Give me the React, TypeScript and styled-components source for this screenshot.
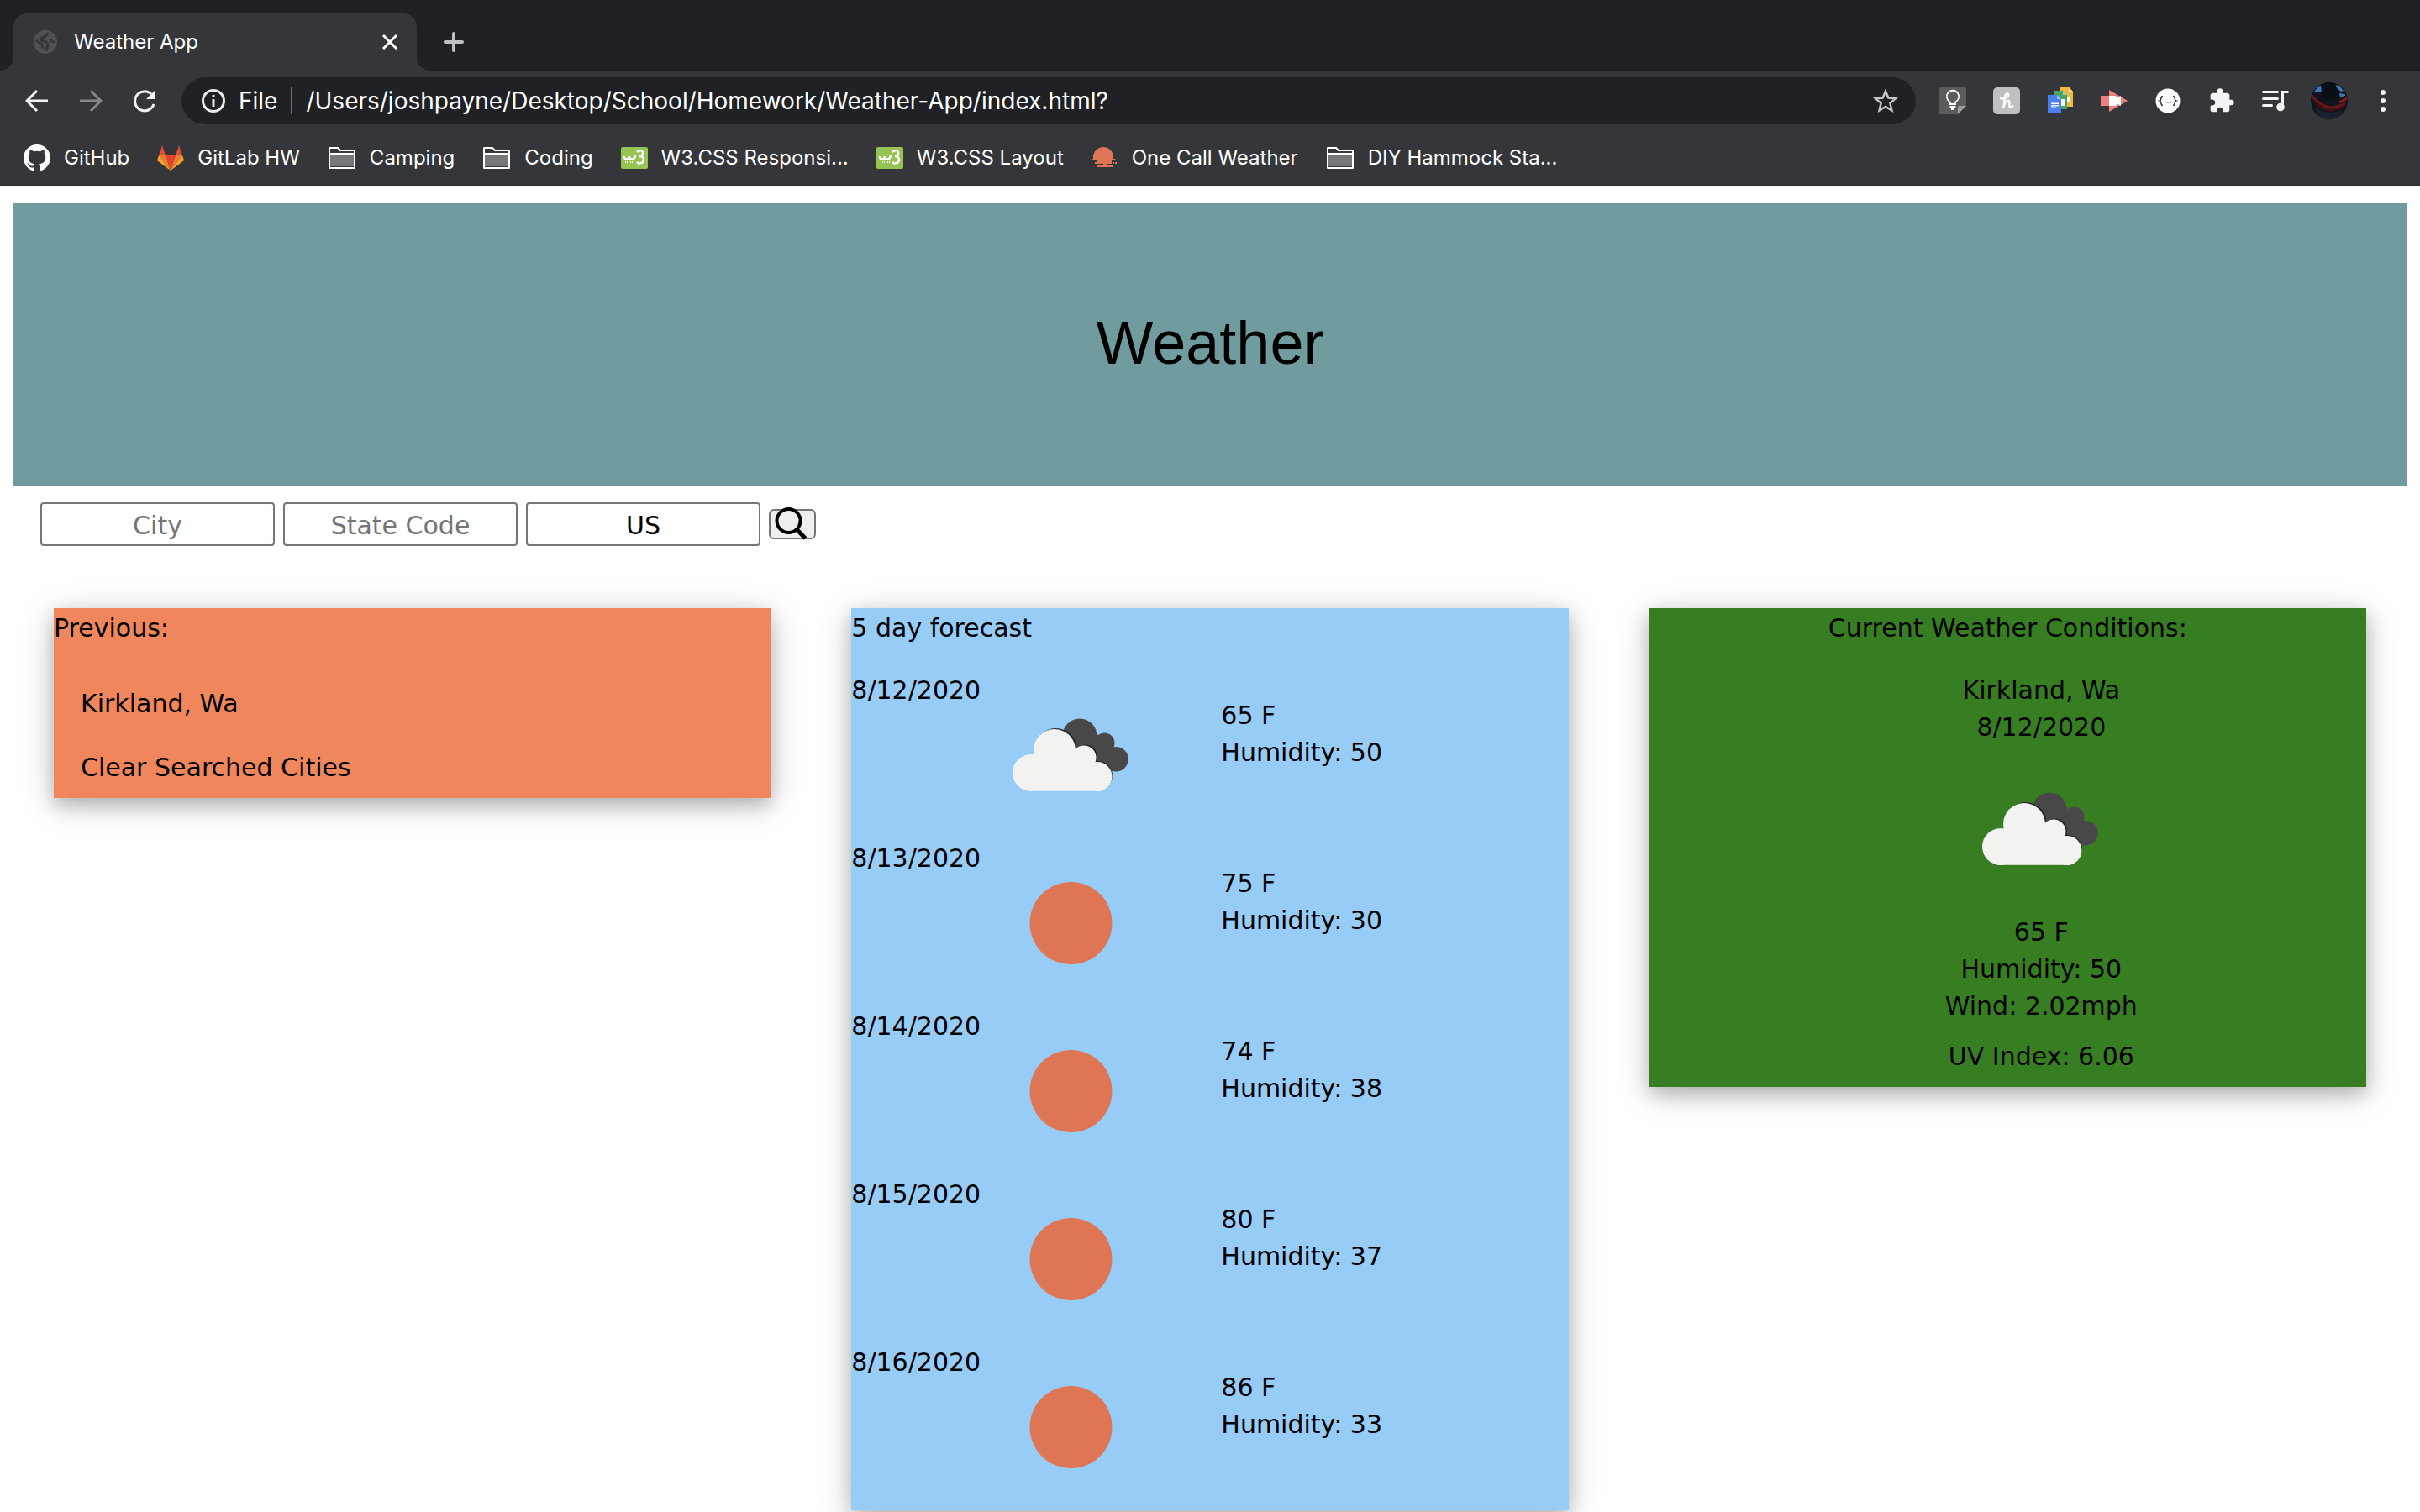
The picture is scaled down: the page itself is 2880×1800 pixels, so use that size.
import React from 'react';
import styled, { createGlobalStyle } from 'styled-components';

const GlobalStyle = createGlobalStyle`
  *, *::before, *::after { box-sizing: border-box; }
  html, body { margin: 0; background: #fff; color: #000; }
  body { font-family: Verdana, "DejaVu Sans", sans-serif; font-size: 30px; line-height: 44px; overflow-x: hidden; }
  ul, p, h1, h2, form { margin: 0; padding: 0; font-weight: 400; }
  ul { list-style: none; }
  button, input { font: inherit; }
  svg { display: block; }
`;

/* ---------- browser frame ---------- */

const Chrome = styled.header`
  background: #35363a;
  color: #fff;
  border-bottom: 2px solid #28292c;
  font-family: Inter, Roboto, sans-serif;
  font-size: 24px;
  line-height: 32px;
`;

const TabStrip = styled.div`
  display: flex;
  align-items: flex-end;
  height: 84px;
  padding: 0 16px;
  background: #202124;
`;

const Tab = styled.div`
  position: relative;
  display: flex;
  align-items: center;
  gap: 20px;
  width: 480px;
  height: 68px;
  padding: 0 16px 0 24px;
  border-radius: 16px 16px 0 0;
  background: #35363a;

  &::before, &::after {
    content: "";
    position: absolute;
    bottom: 0;
    width: 16px;
    height: 16px;
  }
  &::before { left: -16px; background: radial-gradient(circle at 0 0, #202124 16px, #35363a 16px); }
  &::after { right: -16px; background: radial-gradient(circle at 100% 0, #202124 16px, #35363a 16px); }
`;

const TabTitle = styled.span`
  flex: 1;
`;

const IconButton = styled.button<{ $size?: number }>`
  display: flex;
  flex: none;
  align-items: center;
  justify-content: center;
  width: ${(p) => p.$size ?? 64}px;
  height: ${(p) => p.$size ?? 64}px;
  padding: 0;
  border: 0;
  background: transparent;
  color: #f1f3f4;
`;

const NewTab = styled(IconButton)`
  margin: 0 0 2px 12px;
  color: #bdc1c6;
`;

const Toolbar = styled.nav`
  display: flex;
  align-items: center;
  height: 72px;
  padding: 0 12px;
`;

const Omnibox = styled.div`
  display: flex;
  flex: 1;
  align-items: center;
  height: 56px;
  margin: 0 12px;
  padding: 0 4px 0 24px;
  border-radius: 28px;
  background: #202124;
  font-size: 28px;
`;

const Scheme = styled.label`
  padding: 0 16px;
  border-right: 2px solid #6b6d70;
`;

const Address = styled.input`
  flex: 1;
  min-width: 0;
  padding: 0 16px;
  border: 0;
  outline: 0;
  background: transparent;
  color: #fff;
`;

const Bookmarks = styled.nav`
  display: flex;
  align-items: center;
  gap: 33px;
  height: 64px;
  padding: 0 28px;
`;

const Bookmark = styled.a`
  display: flex;
  align-items: center;
  gap: 16px;
  color: #fff;
  text-decoration: none;
  white-space: nowrap;
`;

/* ---------- page ---------- */

const Page = styled.main`
  padding: 20px 16px 0;
`;

const Banner = styled.div`
  padding: 112px 32px 116px;
  background: #709c9f;
  text-align: center;
`;

const Title = styled.h1`
  font-family: "Liberation Sans", Arial, sans-serif;
  font-size: 72px;
  line-height: 108px;
`;

const SearchForm = styled.form`
  display: flex;
  align-items: center;
  gap: 10px;
  padding: 20px 32px 0;
`;

const Field = styled.input`
  width: 279px;
  height: 52px;
  padding: 4px 4px 2px;
  border: 2px solid #767676;
  border-radius: 4px;
  outline: 0;
  background: #fff;
  color: #000;
  text-align: center;

  &::placeholder { color: #757575; opacity: 1; }
`;

const SearchButton = styled.button`
  display: flex;
  align-items: center;
  justify-content: center;
  width: 56px;
  height: 36px;
  padding: 0 8px 0 4px;
  border: 2px solid #767676;
  border-radius: 6px;
  background: #efefef;

  svg { flex: none; }
`;

const Columns = styled.div`
  display: grid;
  grid-template-columns: repeat(3, minmax(0, 1fr));
  align-items: start;
  gap: 96px;
  padding: 74px 48px 96px;
`;

const Card = styled.section<{ $tone: string }>`
  padding-top: 2px;
  background: ${(p) => p.$tone};
  box-shadow: 0 8px 20px rgba(0, 0, 0, 0.2), 0 8px 40px rgba(0, 0, 0, 0.19);
`;

const CardTitle = styled.h2<{ $centered?: boolean }>`
  margin-bottom: 30px;
  font-size: 30px;
  line-height: 44px;
  text-align: ${(p) => (p.$centered ? 'center' : 'left')};
`;

const CityButton = styled.button`
  display: block;
  padding: 16px 32px;
  border: 0;
  background: transparent;
  color: #000;

  &:last-child { padding-bottom: 14px; }
`;

const Day = styled.li`
  display: grid;
  grid-template-columns: 162px 200px 1fr;
  height: 200px;

  &:last-child { height: 198px; }
`;

const Reading = styled.div`
  padding: 30px 0 0 78px;
`;

const Current = styled.div`
  display: flex;
  flex-direction: column;
  align-items: center;
  padding-left: 80px;
`;

const UvIndex = styled.p`
  padding: 16px 32px 14px;
`;

/* ---------- drawings ---------- */

const Clouds = () => (
  <svg width="200" height="200" viewBox="0 0 200 200" role="img" aria-label="Broken clouds">
    <g fill="#484849">
      <circle cx="110" cy="76" r="20.500" />
      <circle cx="139.500" cy="84.500" r="12" />
      <circle cx="153" cy="103.800" r="14.800" />
      <path d="M104 70h24l16 22 6 26h-34z" />
    </g>
    <g fill="#222224">
      <circle cx="81.500" cy="92" r="25" />
      <circle cx="116.500" cy="101" r="14.500" />
      <circle cx="131.500" cy="123.500" r="17.500" />
    </g>
    <g fill="#f2f2f0">
      <circle cx="80" cy="93" r="25" />
      <circle cx="52" cy="120" r="22" />
      <circle cx="115" cy="102" r="14.500" />
      <circle cx="131" cy="124.500" r="17.500" />
      <path d="M48 141.700h87V112L125 107 104 92H60L50 108z" />
    </g>
  </svg>
);

const Sun = () => (
  <svg width="200" height="200" viewBox="0 0 200 200" role="img" aria-label="Clear sky">
    <circle cx="99.500" cy="99" r="49" fill="#de7554" />
  </svg>
);

const Magnifier = () => (
  <svg width="40" height="40" viewBox="0 0 40 40" fill="none" stroke="#000" strokeWidth="4" aria-hidden="true">
    <circle cx="17.500" cy="16" r="14" />
    <path d="M27 26l10.500 11" strokeWidth="5" />
  </svg>
);

const Globe = () => (
  <svg width="28" height="28" viewBox="0 0 28 28" aria-hidden="true">
    <circle cx="14" cy="14" r="14" fill="#505154" />
    <path
      d="M17 3c-1 4-4 5-7 6-2 1-1 4 2 4 3 1 5 1 5 4s-1 3-2 8M3 12c2 2 4 2 6 4s2 4 2 6M20 11c1 2 3 3 5 3"
      fill="none" stroke="#35363a" strokeWidth="3"
    />
  </svg>
);

const Close = () => (
  <svg width="18" height="18" viewBox="0 0 18 18" stroke="#fff" strokeWidth="3" aria-hidden="true">
    <path d="M1 1l16 16M17 1L1 17" />
  </svg>
);

const Plus = () => (
  <svg width="24" height="24" viewBox="0 0 24 24" stroke="currentColor" strokeWidth="4" strokeLinecap="round" aria-hidden="true">
    <path d="M12 2v20M2 12h20" />
  </svg>
);

const Arrow = ({ forward }: { forward?: boolean }) => (
  <svg width="28" height="28" viewBox="0 0 28 28" fill="none" stroke={forward ? '#85868a' : '#f1f3f4'} strokeWidth="3" aria-hidden="true">
    {forward ? <path d="M1 14h24M14 2l12 12-12 12" /> : <path d="M27 14H3M14 2L2 14l12 12" />}
  </svg>
);

const Reload = () => (
  <svg width="28" height="28" viewBox="0 0 28 28" aria-hidden="true">
    <path d="M25 18A11.500 11.500 0 1 1 22 6" fill="none" stroke="#f1f3f4" strokeWidth="3" />
    <path d="M27 1v11H16z" fill="#f1f3f4" />
  </svg>
);

const Info = () => (
  <svg width="28" height="28" viewBox="0 0 28 28" aria-hidden="true">
    <circle cx="14" cy="14" r="12.500" fill="none" stroke="#e8eaed" strokeWidth="3" />
    <path d="M12.500 12h3v9h-3zM12.500 7h3v3h-3z" fill="#e8eaed" />
  </svg>
);

const Star = () => (
  <svg width="30" height="30" viewBox="0 0 30 30" fill="none" stroke="#c4c6c9" strokeWidth="2.500" aria-hidden="true">
    <path d="M15 3.500l3.300 8 8.700.7-6.600 5.700 2 8.600L15 22l-7.400 4.500 2-8.600L3 12.200l8.700-.7z" />
  </svg>
);

const Keep = () => (
  <svg width="32" height="32" viewBox="0 0 32 32" aria-hidden="true">
    <path d="M2 0h28a2 2 0 0 1 2 2v20L22 32H2a2 2 0 0 1-2-2V2a2 2 0 0 1 2-2z" fill="#5c5c5c" />
    <path d="M22 32V24a2 2 0 0 1 2-2h8z" fill="#9c9c9c" />
    <path d="M13 20v-2.500a7.200 7.200 0 1 1 6 0V20z" fill="none" stroke="#fff" strokeWidth="1.800" />
    <path d="M12.500 22h7v2h-7zM14 25h4v2h-4z" fill="#fff" />
  </svg>
);

const Honey = () => (
  <svg width="32" height="32" viewBox="0 0 32 32" aria-hidden="true">
    <rect width="32" height="32" rx="5" fill="#c0c0c0" />
    <path
      d="M9 13c3 1.500 10-1 9.500-4.500C18 6.500 14.500 7 14 11l-1.500 12.500C13.500 19 16 15.500 18.500 16c2.500.5 0 5 1 7 .8 1.500 3 .5 4-.5"
      fill="none" stroke="#fff" strokeWidth="2.300" strokeLinecap="round" strokeLinejoin="round"
    />
  </svg>
);

const Docs = () => (
  <svg width="32" height="32" viewBox="0 0 32 32" aria-hidden="true">
    <path d="M15 0h11l5 5v18H15z" fill="#f0b840" />
    <path d="M26 0v5h5z" fill="#f7dc9a" />
    <path d="M24 11h3v7h-3z" fill="#fff" />
    <path d="M8 4h11l5 5v17H8z" fill="#49a560" />
    <path d="M19 4v5h5z" fill="#9ad3ab" />
    <path d="M17 14h4v8h-4z" fill="#fff" />
    <path d="M1 9h11l5 5v17H1z" fill="#4a80ee" />
    <path d="M12 9v5h5z" fill="#9cbcf8" />
    <path d="M5 18.500h9V20H5zM5 21h9v1.500H5zM5 23.500h6V25H5z" fill="#fff" />
  </svg>
);

const Video = () => (
  <svg width="32" height="32" viewBox="0 0 32 32" aria-hidden="true">
    <path d="M0 10h10V3l22 13-22 13v-7H0z" fill="#f0807e" />
    <path d="M10 10h7c1.500 0 2 1 2 3l5-3v12l-5-3c0 2-.5 3-2 3h-7z" fill="#fff" />
  </svg>
);

const Json = () => (
  <svg width="30" height="30" viewBox="0 0 30 30" aria-hidden="true">
    <circle cx="15" cy="15" r="14.500" fill="#fff" />
    <path
      d="M9 9.500c-3.500 0-.8 4.500-3.800 5.500 3 1 .3 5.500 3.800 5.500M21 9.500c3.500 0 .8 4.500 3.800 5.500-3 1-.3 5.500-3.800 5.500"
      fill="none" stroke="#333" strokeWidth="1.500"
    />
    <path d="M11 16h1.500v1.500H11zM14.300 16h1.500v1.500h-1.500zM17.600 16h1.500v1.500h-1.500z" fill="#333" />
  </svg>
);

const Puzzle = () => (
  <svg width="32" height="32" viewBox="0 0 24 24" fill="#f1f3f4" aria-hidden="true">
    <path d="M20.500 11H19V7c0-1.100-.9-2-2-2h-4V3.500a2.500 2.500 0 0 0-5 0V5H4c-1.100 0-1.990.9-1.990 2v3.800H3.500c1.490 0 2.700 1.210 2.700 2.700s-1.210 2.700-2.700 2.700H2V20c0 1.100.9 2 2 2h3.800v-1.500c0-1.490 1.210-2.700 2.700-2.700s2.700 1.210 2.700 2.700V22H17c1.100 0 2-.9 2-2v-4h1.500a2.500 2.500 0 0 0 0-5z" />
  </svg>
);

const Playlist = () => (
  <svg width="32" height="32" viewBox="0 0 32 32" aria-hidden="true">
    <path d="M1.500 5.500h17M1.500 13.500h17M1.500 21.500h10" stroke="#f1f3f4" strokeWidth="3" strokeLinecap="round" />
    <path d="M24.500 23V5.500h7" fill="none" stroke="#f1f3f4" strokeWidth="3" />
    <circle cx="22" cy="23.500" r="4.800" fill="#f1f3f4" />
  </svg>
);

const Avatar = () => (
  <svg width="44" height="44" viewBox="0 0 44 44" aria-hidden="true">
    <defs>
      <clipPath id="avatar-clip"><circle cx="22" cy="22" r="22" /></clipPath>
    </defs>
    <g clipPath="url(#avatar-clip)">
      <rect width="44" height="44" fill="#10141c" />
      <path d="M4 11l5-6 7-3-2 5 2 3-8 2zM27 3l7 1 5 6-3 1-4-3zM34 13l7 1v2l-6 2z" fill="#3f76b4" />
      <path d="M12 3l3-3h13l3 6 3 12-8 4-12-2z" fill="#0b0e14" />
      <path d="M1 15l11 9 12 5 18-6-2 8-16 4-14-4z" fill="#3a1216" />
      <path d="M1 15c3 6 8 9 13 12 8 4 17 4 27-2" fill="none" stroke="#6e161a" strokeWidth="2.500" />
      <path d="M43 19l-9 5" stroke="#8c1c20" strokeWidth="3" />
      <path d="M4 30l12 5 10 1 12-3-6 11H12z" fill="#18222e" />
    </g>
  </svg>
);

const Dots = () => (
  <svg width="8" height="28" viewBox="0 0 8 28" fill="#f1f3f4" aria-hidden="true">
    <circle cx="4" cy="4" r="3" />
    <circle cx="4" cy="14" r="3" />
    <circle cx="4" cy="24" r="3" />
  </svg>
);

const GitHub = () => (
  <svg width="32" height="32" viewBox="0 0 16 16" fill="#fff" aria-hidden="true">
    <path d="M8 0C3.580 0 0 3.580 0 8c0 3.540 2.290 6.530 5.470 7.590.4.070.55-.17.55-.38 0-.19-.01-.82-.01-1.490-2.010.37-2.530-.49-2.690-.94-.09-.23-.48-.94-.82-1.130-.28-.15-.68-.52-.01-.53.63-.01 1.080.58 1.230.82.72 1.210 1.870.87 2.330.66.07-.52.28-.87.51-1.070-1.780-.2-3.640-.89-3.640-3.950 0-.87.31-1.590.82-2.150-.08-.2-.36-1.020.08-2.120 0 0 .67-.21 2.200.82.64-.18 1.320-.27 2-.27s1.360.09 2 .27c1.530-1.040 2.200-.82 2.200-.82.44 1.100.16 1.920.08 2.120.51.56.82 1.270.82 2.150 0 3.070-1.870 3.750-3.650 3.950.29.25.54.73.54 1.480 0 1.070-.01 1.930-.01 2.200 0 .21.15.46.55.38A8.010 8.010 0 0 0 16 8c0-4.420-3.580-8-8-8z" />
  </svg>
);

const GitLab = () => (
  <svg width="32" height="32" viewBox="0 0 32 32" aria-hidden="true">
    <path d="M6 1l4 12H2zM26 1l4 12h-8z" fill="#db4f35" />
    <path d="M16 31L10 13h12z" fill="#e24329" />
    <path d="M16 31L2 13h8zM16 31l14-18h-8z" fill="#ef7c35" />
    <path d="M2 13l14 18L0 19zM30 13L16 31l16-12z" fill="#fca326" />
  </svg>
);

const Folder = () => (
  <svg width="34" height="32" viewBox="0 0 34 32" aria-hidden="true">
    <path d="M2 9h30v18H2z" fill="#76777a" />
    <path d="M2 4h10l3 3h17v21H2z" fill="#35363a" stroke="#fff" strokeWidth="2" strokeLinejoin="round" />
    <path d="M3 12h28v14H3z" fill="#76777a" />
    <path d="M2 11h30" stroke="#fff" strokeWidth="2" />
  </svg>
);

const W3 = () => (
  <svg width="32" height="32" viewBox="0 0 32 32" aria-hidden="true">
    <rect y="3" width="32" height="26" rx="2" fill="#96c353" />
    <path d="M4 14c0 5 5 5 6 0 0 5 6 5 7-1M19 9c3-3 8-2 7 2-1 3-4 3-4 3s5 0 5 4-5 6-8 3" fill="none" stroke="#fff" strokeWidth="2.500" />
    <path d="M5 21h12" stroke="#fff" strokeWidth="2" strokeDasharray="1 1" />
  </svg>
);

const Sunset = () => (
  <svg width="32" height="32" viewBox="0 0 32 32" fill="#de7554" aria-hidden="true">
    <path d="M2 17V15a12 12 0 0 1 24 0v2h2.500v2H24v2h-2v2h-3v2h6v2H6v-2h8v-2H4v-2h2v-2H0v-2z" />
    <path d="M21 21h3v2h-3zM25 21h2v2h-2zM28 21h2v2h-2z" />
  </svg>
);

/* ---------- content ---------- */

const extensions = [
  { name: 'Keep', icon: <Keep /> },
  { name: 'Honey', icon: <Honey /> },
  { name: 'Docs', icon: <Docs /> },
  { name: 'Recorder', icon: <Video /> },
  { name: 'JSON viewer', icon: <Json /> },
  { name: 'Extensions', icon: <Puzzle /> },
  { name: 'Media', icon: <Playlist /> },
  { name: 'Profile', icon: <Avatar /> },
  { name: 'Menu', icon: <Dots /> },
];

const bookmarks = [
  { label: 'GitHub', icon: <GitHub /> },
  { label: 'GitLab HW', icon: <GitLab /> },
  { label: 'Camping', icon: <Folder /> },
  { label: 'Coding', icon: <Folder /> },
  { label: 'W3.CSS Responsi...', icon: <W3 /> },
  { label: 'W3.CSS Layout', icon: <W3 /> },
  { label: 'One Call Weather', icon: <Sunset /> },
  { label: 'DIY Hammock Sta...', icon: <Folder /> },
];

const forecast = [
  { date: '8/12/2020', cloudy: true, temp: 65, humidity: 50 },
  { date: '8/13/2020', cloudy: false, temp: 75, humidity: 30 },
  { date: '8/14/2020', cloudy: false, temp: 74, humidity: 38 },
  { date: '8/15/2020', cloudy: false, temp: 80, humidity: 37 },
  { date: '8/16/2020', cloudy: false, temp: 86, humidity: 33 },
];

export default function App() {
  return (
    <>
      <GlobalStyle />
      <Chrome>
        <TabStrip>
          <Tab>
            <Globe />
            <TabTitle>Weather App</TabTitle>
            <IconButton $size={32} aria-label="Close tab"><Close /></IconButton>
          </Tab>
          <NewTab aria-label="New tab"><Plus /></NewTab>
        </TabStrip>
        <Toolbar aria-label="Browser">
          <IconButton aria-label="Back"><Arrow /></IconButton>
          <IconButton aria-label="Forward"><Arrow forward /></IconButton>
          <IconButton aria-label="Reload"><Reload /></IconButton>
          <Omnibox>
            <Info />
            <Scheme htmlFor="address">File</Scheme>
            <Address id="address" defaultValue="/Users/joshpayne/Desktop/School/Homework/Weather-App/index.html?" />
            <IconButton aria-label="Bookmark this page"><Star /></IconButton>
          </Omnibox>
          {extensions.map((e) => (
            <IconButton key={e.name} aria-label={e.name}>{e.icon}</IconButton>
          ))}
        </Toolbar>
        <Bookmarks aria-label="Bookmarks">
          {bookmarks.map((b) => (
            <Bookmark key={b.label} href="#">{b.icon}{b.label}</Bookmark>
          ))}
        </Bookmarks>
      </Chrome>

      <Page>
        <Banner>
          <Title>Weather</Title>
        </Banner>

        <SearchForm onSubmit={(e) => e.preventDefault()}>
          <Field aria-label="City" placeholder="City" />
          <Field aria-label="State Code" placeholder="State Code" />
          <Field aria-label="Country" defaultValue="US" />
          <SearchButton aria-label="Search"><Magnifier /></SearchButton>
        </SearchForm>

        <Columns>
          <Card $tone="#ef865c">
            <CardTitle>Previous:</CardTitle>
            <CityButton>Kirkland, Wa</CityButton>
            <CityButton>Clear Searched Cities</CityButton>
          </Card>

          <Card $tone="#97ccf6">
            <CardTitle>5 day forecast</CardTitle>
            <ul>
              {forecast.map((day) => (
                <Day key={day.date}>
                  <p>{day.date}</p>
                  {day.cloudy ? <Clouds /> : <Sun />}
                  <Reading>
                    <p>{day.temp} F</p>
                    <p>Humidity: {day.humidity}</p>
                  </Reading>
                </Day>
              ))}
            </ul>
          </Card>

          <Card $tone="#377e22">
            <CardTitle $centered>Current Weather Conditions:</CardTitle>
            <Current>
              <p>Kirkland, Wa</p>
              <p>8/12/2020</p>
              <Clouds />
              <p>65 F</p>
              <p>Humidity: 50</p>
              <p>Wind: 2.02mph</p>
              <UvIndex>UV Index: 6.06</UvIndex>
            </Current>
          </Card>
        </Columns>
      </Page>
    </>
  );
}
